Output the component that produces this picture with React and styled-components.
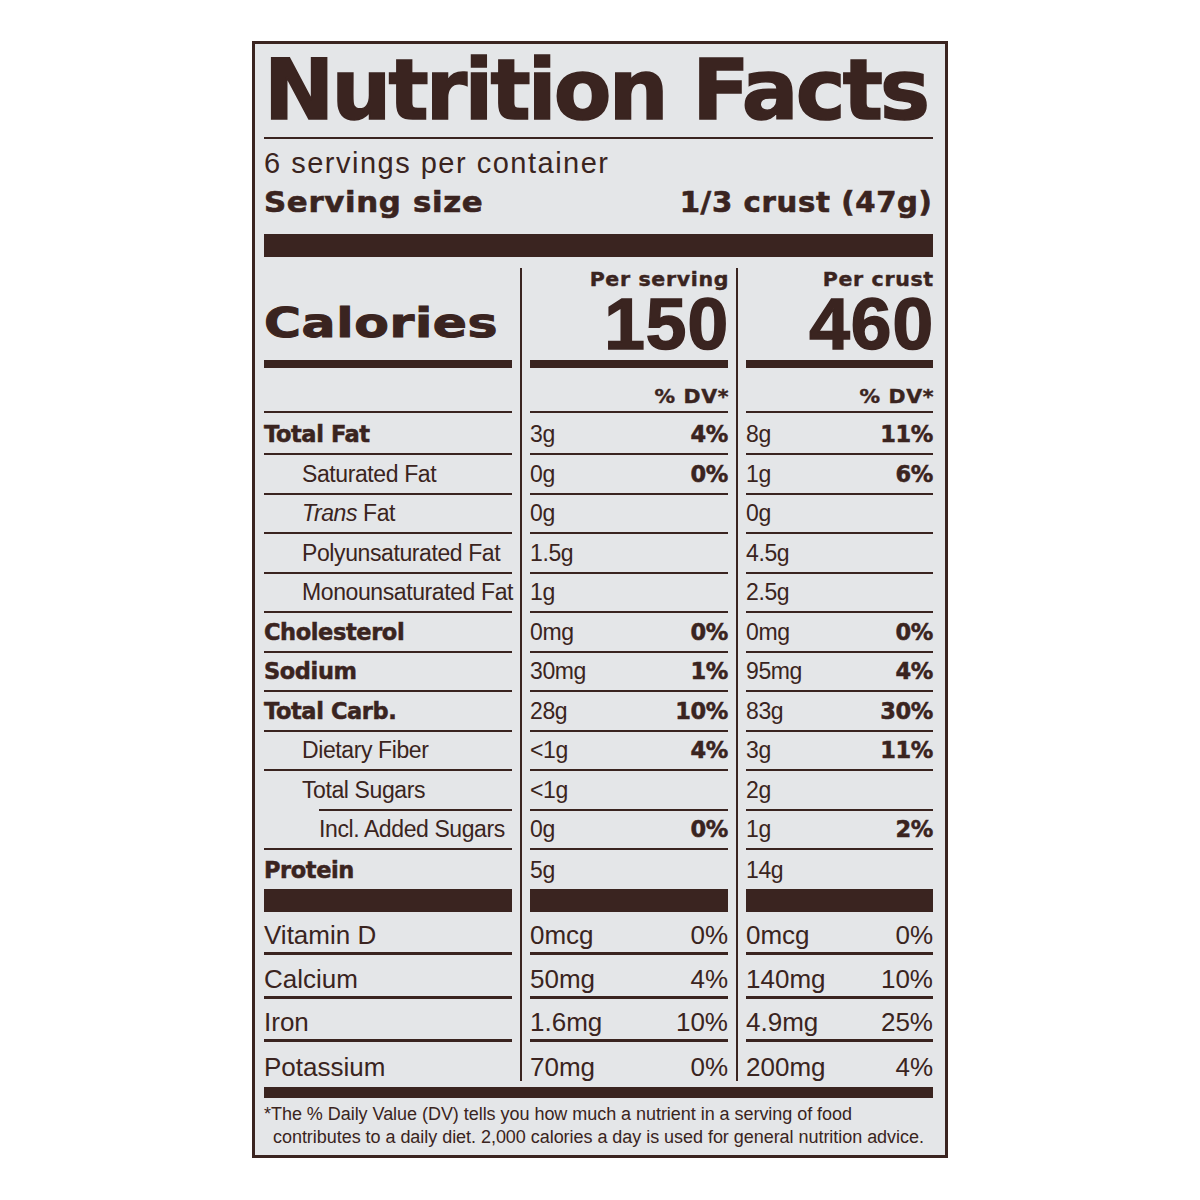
import React from 'react'
import styled, { createGlobalStyle, css } from 'styled-components'

const ink = '#3a2420'
const paper = '#e4e6e8'
const sans = `'Liberation Sans', Arial, sans-serif`
const heavy = `'DejaVu Sans', 'Liberation Sans', sans-serif`

const Global = createGlobalStyle`
  body {
    margin: 0;
    background: #fff;
  }
`

const Page = styled.div`
  padding: 41px 0 0 252px;
`

const Label = styled.div`
  width: 696px;
  box-sizing: border-box;
  border: 3px solid ${ink};
  background: ${paper};
  padding: 0 12px 6px 9px;
  color: ${ink};
  font-family: ${sans};
`

const Title = styled.h1`
  margin: 4px 0 0;
  font: bold 84px/84px ${heavy};
  letter-spacing: -2.8px;
  -webkit-text-stroke: 1.6px ${ink};
  white-space: nowrap;
`

const Rule = styled.div`
  height: 2px;
  margin-top: 5px;
  background: ${ink};
`

const Servings = styled.div`
  margin-top: 10px;
  font-size: 29px;
  line-height: 29px;
  letter-spacing: 1.5px;
`

const SizeRow = styled.div`
  display: flex;
  justify-content: space-between;
  margin-top: 10px;
  font: bold 27.5px/28px ${heavy};
  letter-spacing: 0.6px;
  -webkit-text-stroke: 0.6px ${ink};
`

const SizeText = styled.span`
  display: inline-block;
  transform: scaleX(${p => p.$stretch});
  transform-origin: ${p => (p.$end ? 'right' : 'left')} center;
`

const Bar = styled.div`
  height: ${p => p.$h}px;
  margin-top: ${p => p.$top}px;
  background: ${ink};
`

const Table = styled.div`
  display: grid;
  grid-template-columns: 248px 18px 198px 18px 1fr;
  margin-top: 11px;
`

const Divider = styled.div`
  grid-column: ${p => p.$col};
  grid-row: 1 / span ${p => p.$rows};
  justify-self: center;
  width: 2px;
  background: ${ink};
`

const Cell = styled.div`
  box-sizing: border-box;
  height: ${p => p.$h}px;
  display: flex;
  align-items: flex-end;
  justify-content: ${p => (p.$end ? 'flex-end' : 'space-between')};
  padding: 0 0 ${p => p.$pb}px ${p => p.$indent || 0}px;
  border-bottom: ${p => p.$rule || 0}px solid ${ink};
  white-space: nowrap;
  ${p => p.$inset && css`
    border-bottom-color: transparent;
    background: linear-gradient(${ink}, ${ink}) no-repeat ${p.$inset}px 100% / calc(100% - ${p.$inset}px) ${p.$rule}px;
    background-origin: border-box;
  `}
`

const PerCell = styled(Cell)`
  flex-direction: column;
  align-items: flex-end;
  justify-content: space-between;
  padding-top: 1px;
`

const PerLabel = styled.div`
  display: inline-block;
  font: bold 19px/20px ${heavy};
  letter-spacing: 0.6px;
  margin-right: -0.6px;
  -webkit-text-stroke: 0.4px ${ink};
  transform: scaleX(1.08);
  transform-origin: right center;
`

const BigNum = styled.div`
  font: bold 73px/66px ${sans};
  letter-spacing: 1px;
  margin-right: -1px;
  -webkit-text-stroke: 1.6px ${ink};
`

const CaloriesText = styled.span`
  display: inline-block;
  font: bold 40px/40px ${heavy};
  letter-spacing: 0.5px;
  -webkit-text-stroke: 1px ${ink};
  transform: scaleX(1.26);
  transform-origin: left bottom;
`

const Name = styled.span`
  ${p => p.$bold
    ? css`
      font: bold 22.5px/23px ${heavy};
      letter-spacing: -0.4px;
      -webkit-text-stroke: 0.5px ${ink};
    `
    : css`
      font-size: ${p.$big ? 26 : 23}px;
      line-height: ${p.$big ? 26 : 23}px;
      letter-spacing: ${p.$big ? 0 : -0.4}px;
    `}
`

const Value = styled.span`
  font-size: ${p => (p.$big ? 26 : 23)}px;
  line-height: ${p => (p.$big ? 26 : 23)}px;
  letter-spacing: ${p => (p.$big ? 0 : -0.4)}px;
`

const Pct = styled.span`
  ${p => p.$big
    ? css`
      font-size: 26px;
      line-height: 26px;
    `
    : css`
      font: bold 22.5px/23px ${heavy};
      letter-spacing: -0.4px;
      -webkit-text-stroke: 0.5px ${ink};
    `}
`

const Footer = styled.div`
  margin-top: 5px;
  font-size: 18px;
  line-height: 23px;
  letter-spacing: -0.04px;
`

const FootLine = styled.div`
  padding-left: ${p => p.$indent || 0}px;
  white-space: nowrap;
`

const macros = [
  { name: 'Total Fat', bold: true, h: 42, a: ['3g', '4%'], b: ['8g', '11%'] },
  { name: 'Saturated Fat', indent: 38, a: ['0g', '0%'], b: ['1g', '6%'] },
  { name: <><i>Trans</i> Fat</>, indent: 38, a: ['0g'], b: ['0g'] },
  { name: 'Polyunsaturated Fat', indent: 38, a: ['1.5g'], b: ['4.5g'] },
  { name: 'Monounsaturated Fat', indent: 38, a: ['1g'], b: ['2.5g'] },
  { name: 'Cholesterol', bold: true, a: ['0mg', '0%'], b: ['0mg', '0%'] },
  { name: 'Sodium', bold: true, a: ['30mg', '1%'], b: ['95mg', '4%'] },
  { name: 'Total Carb.', bold: true, a: ['28g', '10%'], b: ['83g', '30%'] },
  { name: 'Dietary Fiber', indent: 38, a: ['<1g', '4%'], b: ['3g', '11%'] },
  { name: 'Total Sugars', indent: 38, inset: 55, a: ['<1g'], b: ['2g'] },
  { name: 'Incl. Added Sugars', indent: 55, a: ['0g', '0%'], b: ['1g', '2%'] },
  { name: 'Protein', bold: true, h: 61.5, rule: 23, pb: 7, a: ['5g'], b: ['14g'] },
]

const micros = [
  { name: 'Vitamin D', a: ['0mcg', '0%'], b: ['0mcg', '0%'] },
  { name: 'Calcium', a: ['50mg', '4%'], b: ['140mg', '10%'] },
  { name: 'Iron', a: ['1.6mg', '10%'], b: ['4.9mg', '25%'] },
  { name: 'Potassium', a: ['70mg', '0%'], b: ['200mg', '4%'], last: true },
]

const rowCount = 2 + macros.length + micros.length

const MacroRow = ({ row }) => {
  const h = row.h || 39.55
  const rule = row.rule || 2
  const pb = row.pb || 7
  return (
    <>
      <Cell $h={h} $rule={rule} $pb={pb} $indent={row.indent} $inset={row.inset}>
        <Name $bold={row.bold}>{row.name}</Name>
      </Cell>
      {[row.a, row.b].map((v, i) => (
        <Cell key={i} $h={h} $rule={rule} $pb={pb}>
          <Value>{v[0]}</Value>
          {v[1] && <Pct>{v[1]}</Pct>}
        </Cell>
      ))}
    </>
  )
}

const MicroRow = ({ row }) => {
  const h = row.last ? 39 : 43.5
  const rule = row.last ? 0 : 3
  const pb = row.last ? 1 : 4
  return (
    <>
      <Cell $h={h} $rule={rule} $pb={pb}>
        <Name $big>{row.name}</Name>
      </Cell>
      {[row.a, row.b].map((v, i) => (
        <Cell key={i} $h={h} $rule={rule} $pb={pb}>
          <Value $big>{v[0]}</Value>
          <Pct $big>{v[1]}</Pct>
        </Cell>
      ))}
    </>
  )
}

const App = () => {
  return (
    <Page>
      <Global />
      <Label>
        <Title>Nutrition Facts</Title>
        <Rule />
        <Servings>6 servings per container</Servings>
        <SizeRow>
          <SizeText $stretch={1.12}>Serving size</SizeText>
          <SizeText $stretch={1.06} $end>1/3 crust (47g)</SizeText>
        </SizeRow>
        <Bar $h={23} $top={18} />
        <Table>
          <Divider $col={2} $rows={rowCount} />
          <Divider $col={4} $rows={rowCount} />

          <Cell $h={100} $rule={8} $pb={17}>
            <CaloriesText>Calories</CaloriesText>
          </Cell>
          <PerCell $h={100} $rule={8} $pb={3}>
            <PerLabel>Per serving</PerLabel>
            <BigNum>150</BigNum>
          </PerCell>
          <PerCell $h={100} $rule={8} $pb={3}>
            <PerLabel>Per crust</PerLabel>
            <BigNum>460</BigNum>
          </PerCell>

          <Cell $h={45} $rule={2} $pb={5} />
          <Cell $h={45} $rule={2} $pb={5} $end>
            <PerLabel>% DV*</PerLabel>
          </Cell>
          <Cell $h={45} $rule={2} $pb={5} $end>
            <PerLabel>% DV*</PerLabel>
          </Cell>

          {macros.map((row, i) => <MacroRow key={i} row={row} />)}
          {micros.map((row, i) => <MicroRow key={i} row={row} />)}
        </Table>
        <Bar $h={11} $top={5.5} />
        <Footer>
          <FootLine>*The % Daily Value (DV) tells you how much a nutrient in a serving of food</FootLine>
          <FootLine $indent={9}>contributes to a daily diet. 2,000 calories a day is used for general nutrition advice.</FootLine>
        </Footer>
      </Label>
    </Page>
  )
}

export default App
